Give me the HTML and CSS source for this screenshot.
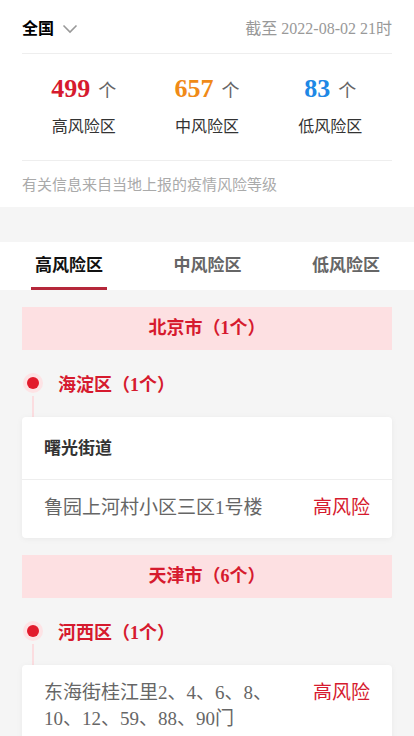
FILE: index.html
```html
<!DOCTYPE html>
<html>
<head>
    <meta charset="UTF-8">
    <meta name="viewport" content="width=device-width, initial-scale=1.0">
    <title>风险区</title>
    <link rel="stylesheet" href="styles.css">
</head>
<body>
    <div class="summary">
        <div class="top-bar">
            <div class="area">全国
                <svg class="chevron" width="16" height="10" viewBox="0 0 16 10"><path d="M1.5 1.5 L8 8 L14.5 1.5" fill="none" stroke="#999" stroke-width="1.6"/></svg>
            </div>
            <div class="date">截至 2022-08-02 21时</div>
        </div>
        <div class="stats">
            <div class="stat">
                <div class="num"><b class="high">499</b><span>个</span></div>
                <div class="label">高风险区</div>
            </div>
            <div class="stat">
                <div class="num"><b class="mid">657</b><span>个</span></div>
                <div class="label">中风险区</div>
            </div>
            <div class="stat">
                <div class="num"><b class="low">83</b><span>个</span></div>
                <div class="label">低风险区</div>
            </div>
        </div>
        <div class="note">有关信息来自当地上报的疫情风险等级</div>
    </div>

    <div class="tabs">
        <span class="tab active">高风险区</span>
        <span class="tab">中风险区</span>
        <span class="tab">低风险区</span>
    </div>

    <div class="list">
        <div class="city">北京市（1个）</div>
        <div class="district"><span class="dot"></span>海淀区（1个）</div>
        <div class="stem"></div>
        <div class="card">
            <div class="street">曙光街道</div>
            <div class="row">
                <span class="addr">鲁园上河村小区三区1号楼</span>
                <span class="level">高风险</span>
            </div>
        </div>

        <div class="city">天津市（6个）</div>
        <div class="district"><span class="dot"></span>河西区（1个）</div>
        <div class="stem"></div>
        <div class="card">
            <div class="row">
                <span class="addr">东海街桂江里2、4、6、8、10、12、59、88、90门</span>
                <span class="level">高风险</span>
            </div>
        </div>
    </div>
</body>
</html>
```

FILE: styles.css
```css
* {
    padding: 0;
    margin: 0;
    box-sizing: border-box;
}
body {
    background: #f5f5f5;
    font-family: "Liberation Serif", "Noto Sans CJK SC", serif;
    color: #333;
}
.summary {
    background: #fff;
    padding: 0 22px;
}
.top-bar {
    height: 54px;
    display: flex;
    justify-content: space-between;
    align-items: center;
    border-bottom: 1px solid #eee;
}
.area {
    font-size: 16px;
    font-weight: bold;
    color: #000;
    display: flex;
    align-items: center;
}
.chevron {
    margin-left: 8px;
    margin-top: 4px;
}
.date {
    font-size: 16px;
    color: #999;
}
.stats {
    display: flex;
    padding: 18px 0 22px;
    border-bottom: 1px solid #eee;
}
.stat {
    flex: 1;
    text-align: center;
}
.num {
    height: 34px;
    line-height: 34px;
}
.num b {
    font-size: 26px;
}
.num span {
    font-size: 18px;
    color: #666;
    margin-left: 8px;
}
.high { color: #d61a2e; }
.mid { color: #f08a16; }
.low { color: #1e88e5; }
.label {
    font-size: 16px;
    color: #333;
    margin-top: 10px;
    line-height: 22px;
}
.note {
    font-size: 15px;
    color: #aaa;
    padding: 14px 0 12px;
    line-height: 20px;
}
.tabs {
    background: #fff;
    margin-top: 35px;
    height: 48px;
    display: flex;
    justify-content: space-between;
    padding: 0 30px 0 31px;
}
.tab {
    font-size: 17px;
    font-weight: bold;
    color: #666;
    line-height: 48px;
    padding: 0 4px;
    border-bottom: 3px solid transparent;
}
.tab.active {
    color: #111;
    border-bottom-color: #b5273a;
}
.list {
    padding: 17px 22px 0;
}
.city {
    background: #fde0e2;
    color: #d61a2e;
    font-size: 18px;
    font-weight: bold;
    text-align: center;
    height: 43px;
    line-height: 43px;
}
.district {
    display: flex;
    align-items: center;
    color: #d61a2e;
    font-size: 18px;
    font-weight: bold;
    margin-top: 20px;
    height: 26px;
}
.dot {
    width: 12px;
    height: 12px;
    border-radius: 50%;
    background: #e21b2c;
    box-shadow: 0 0 0 4px #fde3e5;
    margin: 0 19px 0 5px;
}
.stem {
    width: 2px;
    height: 21px;
    background: #fbdde0;
    margin-left: 10px;
}
.card {
    background: #fff;
    border-radius: 4px;
    box-shadow: 0 1px 6px rgba(0, 0, 0, 0.05);
    margin-bottom: 17px;
}
.street {
    font-size: 17px;
    font-weight: bold;
    color: #333;
    padding: 0 22px;
    height: 63px;
    line-height: 63px;
    border-bottom: 1px solid #eee;
}
.row {
    display: flex;
    justify-content: space-between;
    align-items: flex-start;
    padding: 15px 22px 17px;
    font-size: 19px;
    line-height: 26px;
}
.addr {
    color: #666;
    width: 250px;
}
.level {
    color: #d61a2e;
    white-space: nowrap;
}
```
